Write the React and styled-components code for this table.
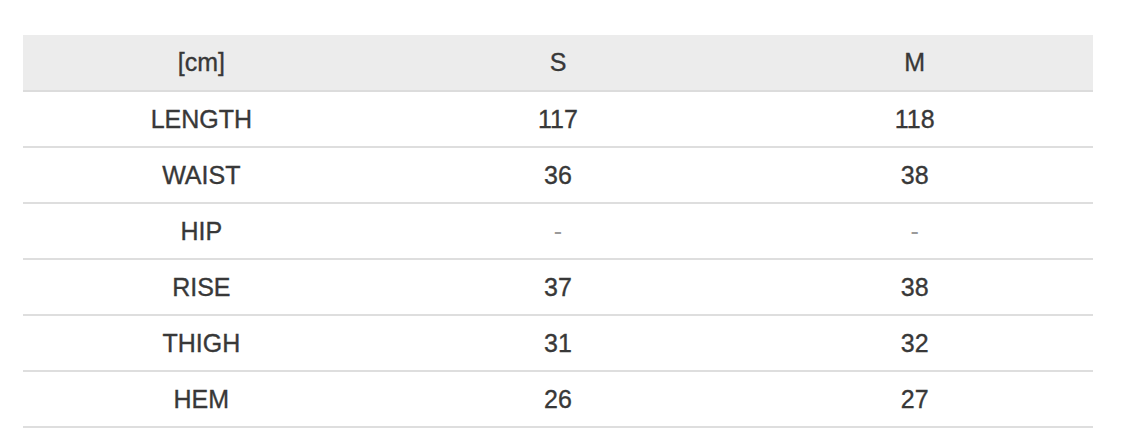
import React from 'react';
import styled, { createGlobalStyle } from 'styled-components';

const GlobalStyle = createGlobalStyle`
  html, body {
    margin: 0;
    padding: 0;
    background: #fff;
  }
  body {
    font-family: "Liberation Sans", Arial, sans-serif;
  }
`;

const Page = styled.main`
  width: 1125px;
  height: 443px;
  padding: 35px 32px 0 23px;
  box-sizing: border-box;
  overflow: hidden;
`;

const Table = styled.table`
  width: 1070px;
  border-collapse: collapse;
  table-layout: fixed;
  color: #383838;
  font-size: 25px;
  -webkit-text-stroke: 0.35px currentColor;
`;

const HeadCell = styled.th`
  height: 55px;
  padding: 0;
  background: #ececec;
  font-weight: 400;
  text-align: center;
  border-bottom: 2px solid #dcdcdc;
`;

const Cell = styled.td`
  height: 54px;
  padding: 0;
  text-align: center;
  border-bottom: 2px solid #dedede;
  color: ${(p) => (p.$muted ? '#9a9a9a' : '#383838')};
  -webkit-text-stroke: ${(p) => (p.$muted ? '0' : '0.35px currentColor')};
`;

const rows = [
  ['LENGTH', '117', '118'],
  ['WAIST', '36', '38'],
  ['HIP', '-', '-'],
  ['RISE', '37', '38'],
  ['THIGH', '31', '32'],
  ['HEM', '26', '27'],
];

export default function App() {
  return (
    <>
      <GlobalStyle />
      <Page>
        <Table>
          <thead>
            <tr>
              <HeadCell>[cm]</HeadCell>
              <HeadCell>S</HeadCell>
              <HeadCell>M</HeadCell>
            </tr>
          </thead>
          <tbody>
            {rows.map((r) => (
              <tr key={r[0]}>
                {r.map((v, i) => (
                  <Cell key={i} $muted={v === '-'}>
                    {v}
                  </Cell>
                ))}
              </tr>
            ))}
          </tbody>
        </Table>
      </Page>
    </>
  );
}
